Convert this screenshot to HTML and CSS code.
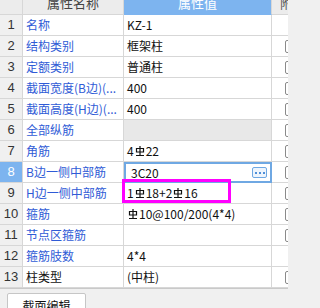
FILE: index.html
```html
<!DOCTYPE html>
<html>
<head>
<meta charset="utf-8">
<link rel="stylesheet" href="styles.css">
</head>
<body>
<div class="grid">
  <div class="h hidx"></div>
  <div class="h hname"><span>属性名称</span></div>
  <div class="h hval"><span>属性值</span></div>
  <div class="h hext"><span>附加</span></div>

  <div class="c idx">1</div><div class="c name">名称</div><div class="c val">KZ-1</div><div class="c ext"></div>
  <div class="c idx">2</div><div class="c name">结构类别</div><div class="c val">框架柱</div><div class="c ext"><i class="cb"></i></div>
  <div class="c idx">3</div><div class="c name">定额类别</div><div class="c val">普通柱</div><div class="c ext"><i class="cb"></i></div>
  <div class="c idx">4</div><div class="c name">截面宽度(B边)(...</div><div class="c val">400</div><div class="c ext"><i class="cb"></i></div>
  <div class="c idx">5</div><div class="c name">截面高度(H边)(...</div><div class="c val">400</div><div class="c ext"><i class="cb"></i></div>
  <div class="c idx">6</div><div class="c name">全部纵筋</div><div class="c val gray"></div><div class="c ext"><i class="cb"></i></div>
  <div class="c idx">7</div><div class="c name">角筋</div><div class="c val">4<svg class="rb" viewBox="0 0 10 12"><path d="M5 1V10M1.5 3.5H8.5V7H1.5ZM1 10.5H9"/></svg>22</div><div class="c ext"><i class="cb"></i></div>
  <div class="c idx sel">8</div><div class="c name">B边一侧中部筋</div><div class="c val edit"><span class="etext">3C20</span><span class="more"><i></i><i></i><i></i></span></div><div class="c ext"><i class="cb"></i></div>
  <div class="c idx">9</div><div class="c name">H边一侧中部筋</div><div class="c val">1<svg class="rb" viewBox="0 0 10 12"><path d="M5 1V10M1.5 3.5H8.5V7H1.5ZM1 10.5H9"/></svg>18+2<svg class="rb" viewBox="0 0 10 12"><path d="M5 1V10M1.5 3.5H8.5V7H1.5ZM1 10.5H9"/></svg>16</div><div class="c ext"><i class="cb"></i></div>
  <div class="c idx">10</div><div class="c name">箍筋</div><div class="c val"><svg class="rb" viewBox="0 0 10 12"><path d="M5 1V10M1.5 3.5H8.5V7H1.5ZM1 10.5H9"/></svg>10@100/200(4*4)</div><div class="c ext"><i class="cb"></i></div>
  <div class="c idx">11</div><div class="c name">节点区箍筋</div><div class="c val"></div><div class="c ext"><i class="cb"></i></div>
  <div class="c idx">12</div><div class="c name">箍筋肢数</div><div class="c val">4*4</div><div class="c ext"></div>
  <div class="c idx">13</div><div class="c name black">柱类型</div><div class="c val">(中柱)</div><div class="c ext"><i class="cb"></i></div>

  <div class="mark"></div>
</div>
<div class="footer">
  <div class="tab">截面编辑</div>
</div>
</body>
</html>
```

FILE: styles.css
```css
html, body {
  margin: 0;
  padding: 0;
  background: #f0f0f0;
  overflow: hidden;
  width: 288px;
  height: 308px;
}

.grid {
  position: relative;
  display: grid;
  grid-template-columns: 23px 101px 148px 16px;
  grid-template-rows: 15px;
  grid-auto-rows: 21px;
  background: #ffffff;
  border-bottom: 1px solid #c9c9c9;
  font-family: "Noto Sans CJK SC", "Noto Sans", sans-serif;
  font-size: 12px;
  color: #111;
}

.h, .c {
  box-sizing: border-box;
  border-right: 1px solid #d7d7d7;
  border-bottom: 1px solid #d7d7d7;
  overflow: hidden;
  white-space: nowrap;
}

.h {
  background: #ececec;
  color: #444;
  font-size: 13px;
  line-height: 14px;
  text-align: center;
}

.h span {
  display: block;
  margin-top: -4px;
}

.hval {
  background: #7db4ef;
  color: #ffffff;
  border-bottom-color: #7db4ef;
}

.hext {
  text-align: left;
  border-right: none;
  padding-left: 8px;
  color: #555;
}

.c {
  display: flex;
  align-items: center;
  line-height: 20px;
}

.idx {
  justify-content: center;
  background: #f0f0f0;
  color: #333;
  font-family: "Liberation Sans", sans-serif;
  font-size: 13px;
}

.idx.sel {
  background: #7db4ef;
  color: #ffffff;
}

.name {
  padding-left: 3px;
  color: #2f5bd6;
}

.name.black {
  color: #111;
}

.val {
  padding-left: 3px;
}

.val.gray {
  background: #e8e8e8;
}

.ext {
  border-right: none;
  padding-left: 13px;
}

.cb {
  display: block;
  flex: none;
  width: 12px;
  height: 13px;
  box-sizing: border-box;
  border: 1px solid #8a8a8a;
  border-radius: 2px;
  background: #fff;
}

.rb {
  width: 10px;
  height: 12px;
  margin: 0 1px 0 1px;
  flex: none;
}

.rb path {
  fill: none;
  stroke: #111;
  stroke-width: 1.2;
}

.edit {
  border: 2px solid #6fa8e3;
  padding-left: 5px;
  padding-right: 3px;
}

.etext {
  flex: 1;
}

.more {
  display: flex;
  align-items: center;
  justify-content: center;
  gap: 2px;
  width: 15px;
  height: 11px;
  box-sizing: border-box;
  border: 1px solid #6fa8e3;
  border-radius: 2px;
  background: #eef5fd;
}

.more i {
  display: block;
  width: 2px;
  height: 2px;
  background: #4f8fd8;
}

.mark {
  position: absolute;
  left: 122px;
  top: 179px;
  width: 109px;
  height: 24px;
  box-sizing: border-box;
  border: 3px solid #ff00ff;
}

.footer {
  height: 20px;
  padding: 4px 0 0 7px;
  box-sizing: border-box;
  overflow: hidden;
}

.tab {
  width: 79px;
  height: 24px;
  box-sizing: border-box;
  border: 1px solid #c6c6c6;
  border-radius: 2px 2px 0 0;
  background: #ffffff;
  text-align: center;
  font-family: "Noto Sans CJK SC", sans-serif;
  font-size: 12px;
  line-height: 20px;
  padding-top: 2px;
  color: #111;
}
```
